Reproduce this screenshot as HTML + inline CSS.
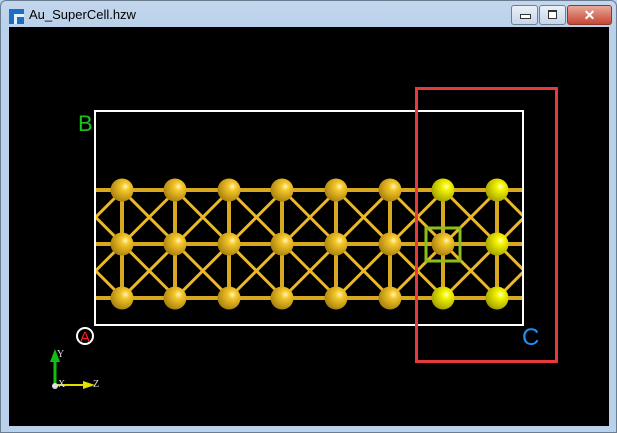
<!DOCTYPE html>
<html style="overflow:hidden;width:617px;height:433px"><head><style>
body{margin:0;width:617px;height:433px;overflow:hidden;position:relative;background:#b9d1ea;font-family:"Liberation Sans",sans-serif;}
.win{position:absolute;left:0;top:0;width:615px;height:431px;border:1px solid #6b7d91;border-radius:6px 6px 0 0;background:linear-gradient(#c3d6ec,#b9d1ea 30px);}
.title{position:absolute;left:29px;top:7px;font-size:13px;color:#000;}
.btn{position:absolute;top:5px;height:18px;border:1px solid #6f7f92;border-radius:3px;background:linear-gradient(#eaf1f9,#c5d5e8);}
</style></head><body>
<div class="win"></div>
<div style="position:absolute;left:9px;top:9px;width:15px;height:15px;background:#1a6fc4"><div style="position:absolute;left:5px;top:5px;width:10px;height:10px;background:#e6eef8"></div><div style="position:absolute;left:8px;top:8px;width:7px;height:7px;background:#1a6fc4"></div></div>
<div class="title">Au_SuperCell.hzw</div>
<div class="btn" style="left:511px;width:25px"><div style="position:absolute;left:8px;top:8px;width:9px;height:3px;border:1px solid #333;background:#fff"></div></div>
<div class="btn" style="left:539px;width:25px"><div style="position:absolute;left:8px;top:4px;width:7px;height:6px;border:1px solid #333;border-top-width:2px;background:#fff"></div></div>
<div class="btn" style="left:567px;width:43px;background:linear-gradient(#e9a99a,#c74632);border-color:#8a3a2e;color:#fff;font-weight:bold;font-size:14px;text-align:center;line-height:18px">✕</div>
<svg style="position:absolute;left:9px;top:27px;display:block;overflow:hidden" width="600" height="399" viewBox="9 27 600 399">
<rect x="9" y="27" width="600" height="399" fill="#000"/>
<defs>
<radialGradient id="g" cx="0.65" cy="0.35" r="0.7"><stop offset="0" stop-color="#fff6c0"/><stop offset="0.25" stop-color="#f5c72a"/><stop offset="1" stop-color="#a8800c"/></radialGradient>
<radialGradient id="y" cx="0.65" cy="0.35" r="0.7"><stop offset="0" stop-color="#ffffc0"/><stop offset="0.25" stop-color="#f4f400"/><stop offset="1" stop-color="#a0a000"/></radialGradient>
</defs>
<g stroke="#eab828" stroke-width="3" id="diag"></g>
<g stroke="#d8a820" stroke-width="4">
<line x1="95" y1="190" x2="523" y2="190"/><line x1="95" y1="244" x2="523" y2="244"/><line x1="95" y1="298" x2="523" y2="298"/>
<line x1="122" y1="190" x2="122" y2="298"/><line x1="175" y1="190" x2="175" y2="298"/><line x1="229" y1="190" x2="229" y2="298"/><line x1="282" y1="190" x2="282" y2="298"/><line x1="336" y1="190" x2="336" y2="298"/><line x1="390" y1="190" x2="390" y2="298"/><line x1="443" y1="190" x2="443" y2="298"/><line x1="497" y1="190" x2="497" y2="298"/>
</g>
<rect x="95" y="111" width="428" height="214" fill="none" stroke="#fff" stroke-width="2"/>
<g id="atoms"></g>
<rect x="426" y="228" width="34" height="33" fill="none" stroke="#8cc018" stroke-width="3"/>
<rect x="416.5" y="88.5" width="140" height="273" fill="none" stroke="#e83a3a" stroke-width="3"/>
<text x="78" y="131" fill="#1ec01e" font-size="22">B</text>
<text x="522" y="345" fill="#2090f0" font-size="24">C</text>
<circle cx="85" cy="336" r="8" fill="none" stroke="#fff" stroke-width="2"/>
<text x="85" y="342" fill="#ff2020" font-size="15" text-anchor="middle">A</text>
<line x1="55" y1="385" x2="55" y2="360" stroke="#10c010" stroke-width="3"/><polygon points="50,362 60,362 55,349" fill="#10c010"/>
<line x1="55" y1="385" x2="85" y2="385" stroke="#e0e000" stroke-width="2"/><polygon points="83,381 83,389 95,385" fill="#e0e000"/>
<text x="57" y="357" fill="#ddd" font-size="10" font-family="Liberation Serif">Y</text>
<text x="58" y="387" fill="#ddd" font-size="10" font-family="Liberation Serif">X</text>
<text x="93" y="387" fill="#ddd" font-size="10" font-family="Liberation Serif">Z</text>
<circle cx="55" cy="386" r="3" fill="#ddd"/>
</svg>
<script>
var ns="http://www.w3.org/2000/svg",d=document.getElementById("diag"),a=document.getElementById("atoms");
var xs=[122,175,229,282,336,390,443,497],ys=[190,244,298];
function seg(xa,ya,xb,yb){ // clip to x in [95,523]
 var s=(yb-ya)/(xb-xa);
 if(xa<95){ya+=s*(95-xa);xa=95;} if(xb>523){yb-=s*(xb-523);xb=523;}
 if(xb<=xa)return;
 var l=document.createElementNS(ns,"line");l.setAttribute("x1",xa);l.setAttribute("y1",ya);l.setAttribute("x2",xb);l.setAttribute("y2",yb);d.appendChild(l);}
for(var k=-3;k<10;k++){var x0=122+k*53.6;
 seg(x0,190,x0+108,298); seg(x0,298,x0+108,190);}
for(var i=0;i<8;i++)for(var j=0;j<3;j++){var c=document.createElementNS(ns,"circle");c.setAttribute("cx",xs[i]);c.setAttribute("cy",ys[j]);c.setAttribute("r",11.5);
var yel=i>=6&&!(i==6&&j==1);c.setAttribute("fill",yel?"url(#y)":"url(#g)");a.appendChild(c);}
</script>
</body></html>
